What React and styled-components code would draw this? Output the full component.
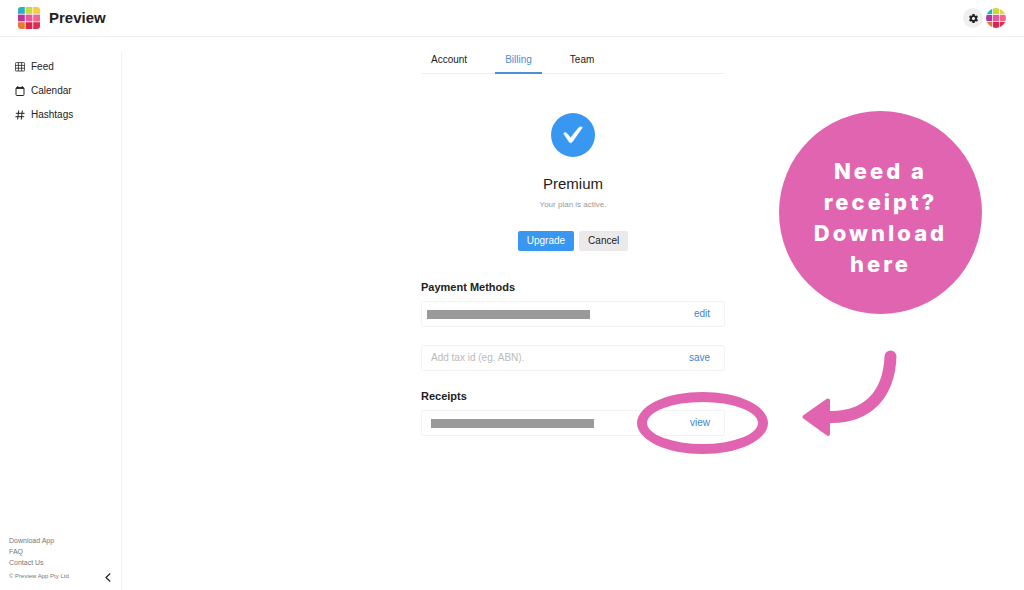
import React from 'react'
import styled, { createGlobalStyle } from 'styled-components'
import { IoMdSettings } from 'react-icons/io'

const tiles = [
  '#2cb0bd', '#c9d83c', '#fbc944',
  '#b5369a', '#e6589d', '#f0688c',
  '#e5793a', '#d9264d', '#dd2f50',
]

function Tiles({ size, label }) {
  return (
    <svg width={size} height={size} viewBox="0 0 22 22" role="img" aria-label={label}>
      {tiles.map((color, i) => (
        <rect
          key={color}
          x={(i % 3) * 7.6}
          y={Math.floor(i / 3) * 7.6}
          width="6.8"
          height="6.8"
          fill={color}
        />
      ))}
    </svg>
  )
}

function GridIcon() {
  return (
    <svg width="10" height="10" viewBox="0 0 10 10" fill="none" stroke="#222" strokeWidth="0.8">
      <rect x="0.4" y="0.6" width="9.2" height="8.4" rx="0.8" />
      <path d="M0.4 3.4h9.2M0.4 6.2h9.2M3.4 0.6v8.4M6.6 0.6v8.4" />
    </svg>
  )
}

function CalendarIcon() {
  return (
    <svg width="10" height="10" viewBox="0 0 10 10" fill="none" stroke="#222">
      <rect x="1" y="1.6" width="8" height="7.9" rx="1" />
      <path d="M1 2.2h8" strokeWidth="1.4" />
      <path d="M2.8 0v2M7.2 0v2" />
    </svg>
  )
}

function HashIcon() {
  return (
    <svg width="10" height="10" viewBox="0 0 10 10" fill="none" stroke="#222" strokeLinecap="round">
      <path d="M3.7 0.9L2.7 9.1M7.3 0.9L6.3 9.1M1.2 3.3h8M0.8 6.7h8" />
    </svg>
  )
}

function App() {
  return (
    <Page>
      <GlobalStyle />
      <Header>
        <Brand>
          <LogoBox>
            <Tiles size={22} label="Preview logo" />
          </LogoBox>
          Preview
        </Brand>
        <HeaderActions>
          <SettingsButton aria-label="Settings">
            <IoMdSettings size={11} />
          </SettingsButton>
          <Avatar aria-label="Profile">
            <Tiles size={20} label="Avatar" />
          </Avatar>
        </HeaderActions>
      </Header>
      <Body>
        <Sidebar>
          <Nav>
            <NavLink href="#feed"><GridIcon />Feed</NavLink>
            <NavLink href="#calendar"><CalendarIcon />Calendar</NavLink>
            <NavLink href="#hashtags"><HashIcon />Hashtags</NavLink>
          </Nav>
          <SidebarFooter>
            <FooterLinks>
              <FooterLink href="#download">Download App</FooterLink>
              <FooterLink href="#faq">FAQ</FooterLink>
              <FooterLink href="#contact">Contact Us</FooterLink>
              <Copyright>© Preview App Pty Ltd</Copyright>
            </FooterLinks>
            <CollapseButton aria-label="Collapse sidebar">
              <svg width="6" height="9" viewBox="0 0 6 9" fill="none" stroke="#222" strokeWidth="1.2">
                <path d="M5.2 0.5L1 4.5l4.2 4" />
              </svg>
            </CollapseButton>
          </SidebarFooter>
        </Sidebar>
        <Main>
          <Column>
            <Tabs>
              <Tab href="#account">Account</Tab>
              <Tab href="#billing" $active>Billing</Tab>
              <Tab href="#team">Team</Tab>
            </Tabs>
            <Plan>
              <PlanBadge>
                <svg width="44" height="44" viewBox="0 0 44 44">
                  <path
                    d="M12.6 20.6C13.2 19.2 15 19.2 16 20.6L19.6 24.8L27.6 14.8C28.8 13.4 31 13.4 31.4 14.6L21.4 28.8C20.4 30.2 19 30.2 18 28.8Z"
                    fill="#fff"
                    stroke="#fff"
                    strokeWidth="0.5"
                  />
                </svg>
              </PlanBadge>
              <PlanName>Premium</PlanName>
              <PlanStatus>Your plan is active.</PlanStatus>
              <PlanButtons>
                <Button $primary>Upgrade</Button>
                <Button>Cancel</Button>
              </PlanButtons>
            </Plan>
            <Section>
              <SectionTitle>Payment Methods</SectionTitle>
              <Row $inset={6}>
                <Redacted />
                <RowButton>edit</RowButton>
              </Row>
              <Row $inset={10}>
                <TaxInput aria-label="Tax id" placeholder="Add tax id (eg. ABN)." />
                <RowButton>save</RowButton>
              </Row>
            </Section>
            <Section>
              <SectionTitle>Receipts</SectionTitle>
              <Row $inset={10}>
                <Redacted />
                <RowButton>view</RowButton>
                <Ring />
              </Row>
            </Section>
            <Note>Need a receipt? Download here</Note>
            <Arrow width="98" height="90" viewBox="0 0 98 90">
              <path d="M89.5 7.5C88 46 66 69 28 68" fill="none" stroke="#e164b0" strokeWidth="12" strokeLinecap="round" />
              <path
                d="M3.5 68L27 51.5V85Z"
                fill="#e164b0"
                stroke="#e164b0"
                strokeWidth="4"
                strokeLinejoin="round"
              />
            </Arrow>
          </Column>
        </Main>
      </Body>
    </Page>
  )
}

export default App

const GlobalStyle = createGlobalStyle`
  * {
    box-sizing: border-box;
  }
  body {
    margin: 0;
    background: #fff;
    color: #222;
    font-family: "Liberation Sans", Arial, sans-serif;
    font-size: 10px;
    line-height: 12px;
  }
  a {
    color: inherit;
    text-decoration: none;
  }
  button, input {
    border: 0;
    padding: 0;
    background: none;
    color: inherit;
    font: inherit;
  }
  svg {
    display: block;
  }
`
const Page = styled.div`
  display: flex;
  flex-direction: column;
  min-height: 100vh;
  overflow-x: hidden;
`
const Header = styled.header`
  display: flex;
  align-items: center;
  justify-content: space-between;
  height: 37px;
  padding: 0 18px;
  border-bottom: 1px solid #eee;
`
const Brand = styled.div`
  display: flex;
  align-items: center;
  gap: 9px;
  font-size: 15px;
  font-weight: bold;
  line-height: 20px;
`
const LogoBox = styled.span`
  border-radius: 3px;
  overflow: hidden;
`
const HeaderActions = styled.div`
  display: flex;
  gap: 3px;
`
const SettingsButton = styled.button`
  display: flex;
  align-items: center;
  justify-content: center;
  width: 20px;
  height: 20px;
  border-radius: 50%;
  background: #efefef;
`
const Avatar = styled.button`
  width: 20px;
  height: 20px;
  border-radius: 50%;
  overflow: hidden;
`
const Body = styled.div`
  display: flex;
  flex: 1;
`
const Sidebar = styled.aside`
  display: flex;
  flex-direction: column;
  justify-content: space-between;
  width: 122px;
  margin-top: 15px;
  border-right: 1px solid #f2f2f2;
`
const Nav = styled.nav`
  padding: 3px 15px;
`
const NavLink = styled.a`
  display: flex;
  align-items: center;
  gap: 6px;
  height: 24px;
`
const SidebarFooter = styled.footer`
  display: flex;
  align-items: flex-end;
  justify-content: space-between;
  padding: 0 10px 8px 9px;
`
const FooterLinks = styled.div`
  display: flex;
  flex-direction: column;
  color: #777;
`
const FooterLink = styled.a`
  font-size: 7px;
  line-height: 11px;
`
const Copyright = styled.small`
  margin-top: 3px;
  font-size: 6px;
  line-height: 11px;
`
const CollapseButton = styled.button``
const Main = styled.main`
  display: flex;
  flex: 1;
  justify-content: center;
  padding: 11px 0 20px;
`
const Column = styled.div`
  position: relative;
  width: 304px;
`
const Tabs = styled.nav`
  display: flex;
  gap: 18px;
  border-bottom: 1px solid #f0f0f0;
`
const Tab = styled.a`
  height: 26px;
  margin-bottom: -1px;
  padding: 6px 10px 0;
  border-bottom: 2px solid ${({ $active }) => ($active ? '#4a90d9' : 'transparent')};
  color: ${({ $active }) => ($active ? '#4a90d9' : '#222')};
`
const Plan = styled.section`
  display: flex;
  flex-direction: column;
  align-items: center;
  padding: 39px 0 29px;
`
const PlanBadge = styled.div`
  border-radius: 50%;
  background: #3897f0;
`
const PlanName = styled.h1`
  margin: 17px 0 0;
  font-size: 15px;
  font-weight: normal;
  line-height: 20px;
`
const PlanStatus = styled.p`
  margin: 5px 0 20px;
  color: #999;
  font-size: 8px;
  line-height: 12px;
`
const PlanButtons = styled.div`
  display: flex;
  gap: 5px;
`
const Button = styled.button`
  height: 20px;
  padding: 0 9px;
  border-radius: 2px;
  background: ${({ $primary }) => ($primary ? '#3897f0' : '#ebe9ea')};
  color: ${({ $primary }) => ($primary ? '#fff' : '#222')};
`
const Section = styled.section`
  margin-bottom: 18px;
`
const SectionTitle = styled.h2`
  margin: 0 0 7px;
  font-size: 11px;
  line-height: 14px;
`
const Row = styled.div`
  position: relative;
  display: flex;
  align-items: center;
  justify-content: space-between;
  height: 26px;
  padding: 0 14px 0 ${({ $inset }) => $inset - 1}px;
  border: 1px solid #f3f3f3;
  border-radius: 2px;

  & + & {
    margin-top: 18px;
  }
`
const Redacted = styled.span`
  width: 163px;
  height: 9px;
  background: #9a9a9a;
`
const RowButton = styled.button`
  color: #3c85d6;
`
const TaxInput = styled.input`
  flex: 1;
  min-width: 0;
  outline: none;

  &::placeholder {
    color: #bbb;
    opacity: 1;
  }
`
/* callouts drawn over the billing page */
const Ring = styled.span`
  position: absolute;
  top: -19px;
  right: -44px;
  width: 131px;
  height: 62px;
  border: 10px solid #e164b0;
  border-radius: 50%;
  pointer-events: none;
`
const Note = styled.p`
  position: absolute;
  top: 63px;
  left: 358px;
  display: flex;
  align-items: center;
  width: 203px;
  height: 203px;
  margin: 0;
  padding: 10px 30px 0;
  border-radius: 50%;
  background: #e164b0;
  color: #fff;
  font-family: Inter, sans-serif;
  font-size: 22px;
  font-weight: 800;
  letter-spacing: 3px;
  line-height: 31px;
  text-align: center;
`
const Arrow = styled.svg`
  position: absolute;
  top: 301px;
  left: 380px;
`
